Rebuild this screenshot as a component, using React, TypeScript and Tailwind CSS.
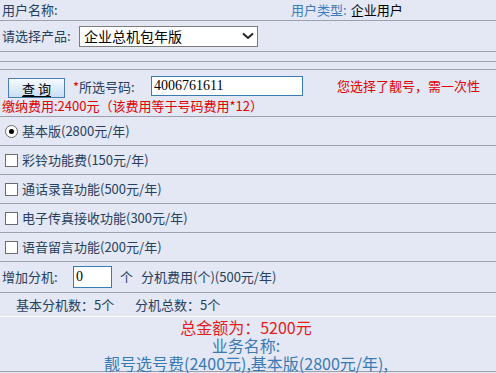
import React from 'react';

const label = 'text-[#26405f]';

const Row: React.FC<{ className?: string; children?: React.ReactNode }> = ({ className = '', children }) => (
  <div className={`flex items-center border-b border-[#9ca1ab] ${className}`}>{children}</div>
);

const Option: React.FC<{ text: string; radio?: boolean; checked?: boolean }> = ({ text, radio, checked }) => (
  <Row className="h-[29px] pl-[5px]">
    {radio ? (
      <span className="w-[13px] h-[13px] rounded-full border border-[#6b6b6b] bg-white flex items-center justify-center">
        {checked && <span className="w-[5px] h-[5px] rounded-full bg-black" />}
      </span>
    ) : (
      <span className="w-[13px] h-[13px] border border-[#6b6b6b] bg-white" />
    )}
    <span className={`ml-[4px] ${label}`}>{text}</span>
  </Row>
);

export default function App() {
  return (
    <div className="w-[496px] h-[373px] overflow-hidden bg-[#e3e8f4] font-['Noto_Sans_CJK_SC',sans-serif] text-[13px] leading-[16px]">
      <Row className="h-[21px]">
        <span className={`pl-[2px] w-[291px] ${label}`}>用户名称:</span>
        <span className="text-[#3c7cbc]">用户类型:</span>
        <span className="ml-[4px] text-black">企业用户</span>
      </Row>

      <Row className="h-[31px]">
        <span className={`pl-[2px] w-[79px] ${label}`}>请选择产品:</span>
        <div className="w-[179px] h-[21px] bg-white border border-[#7c7c7c] flex items-center justify-between pl-[4px] pr-[3px] text-[14px] text-black">
          <span>企业总机包年版</span>
          <svg width="12" height="8" viewBox="0 0 12 8">
            <path d="M1 1.5 L6 6 L11 1.5" fill="none" stroke="#222" strokeWidth="2" />
          </svg>
        </div>
      </Row>

      <Row className="h-[10px]" />
      <Row className="h-[8px]" />

      <div className="h-[47px] border-b border-[#9ca1ab] flex flex-col">
        <div className="flex items-center pt-[4px] h-[27px]">
          <button className="ml-[8px] mt-[5px] w-[57px] h-[20px] border border-[#4b7db3] bg-gradient-to-b from-[#f6fbff] to-[#c9def6] text-black text-[13px] leading-none">
            <span className="underline underline-offset-2">查 询</span>
          </button>
          <span className="ml-[8px] mt-[3px] text-[#e00000]">*</span>
          <span className={`mt-[3px] w-[72px] ${label}`}>所选号码:</span>
          <div className="w-[152px] h-[20px] bg-white border border-[#3c7ab4] flex items-center pl-[2px] font-['Liberation_Serif',serif] text-[14px] text-black">
            4006761611
          </div>
          <span className="ml-[34px] mt-[1px] text-[#e00000] text-[13px]">您选择了靓号，需一次性</span>
        </div>
        <div className="pl-[2px] pt-[1px] text-[#e00000]">缴纳费用:2400元（该费用等于号码费用*12）</div>
      </div>

      <Option text="基本版(2800元/年)" radio checked />
      <Option text="彩铃功能费(150元/年)" />
      <Option text="通话录音功能(500元/年)" />
      <Option text="电子传真接收功能(300元/年)" />
      <Option text="语音留言功能(200元/年)" />

      <Row className="h-[31px]">
        <span className={`pl-[2px] w-[73px] ${label}`}>增加分机:</span>
        <div className="w-[39px] h-[22px] bg-white border border-[#3c7ab4] flex items-center pl-[2px] font-['Liberation_Serif',serif] text-[14px] text-black">
          0
        </div>
        <span className={`ml-[8px] ${label}`}>个</span>
        <span className={`ml-[8px] ${label}`}>分机费用(个)(500元/年)</span>
      </Row>

      <div className="h-[24px] flex items-center border-b border-white">
        <span className={`pl-[16px] w-[135px] ${label}`}>基本分机数：5个</span>
        <span className={label}>分机总数：5个</span>
      </div>

      <div className="h-[55px] border-b border-[#9ca1ab] flex flex-col items-center pt-[1px] text-[16px] leading-[18px] pr-[4px]">
        <div className="text-[#e31b1b]">总金额为：5200元</div>
        <div className="text-[#3a7ab6]">业务名称:</div>
        <div className="text-[#3a7ab6]">靓号选号费(2400元),基本版(2800元/年),</div>
      </div>
    </div>
  );
}
